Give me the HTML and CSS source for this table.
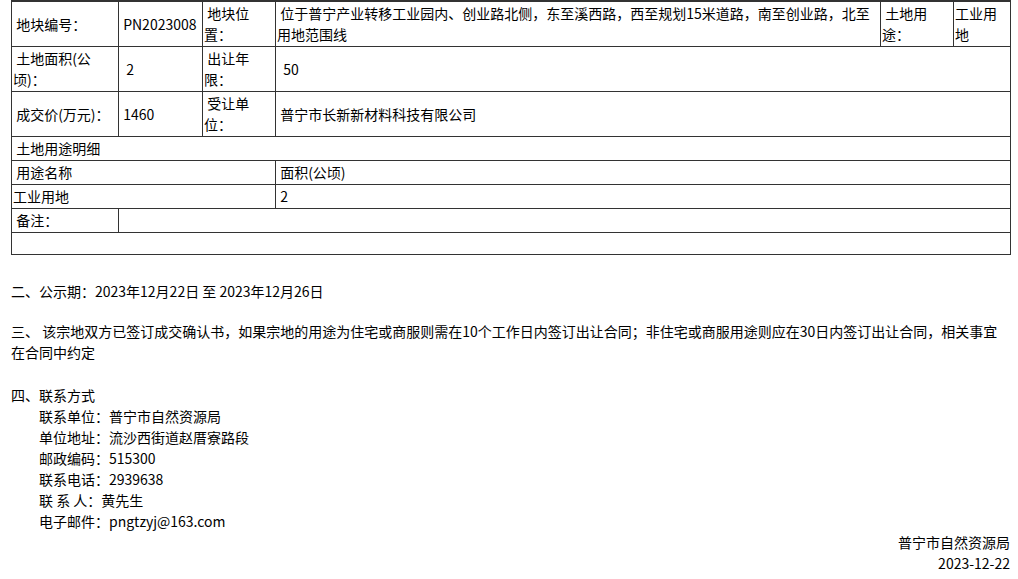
FILE: index.html
```html
<!doctype html>
<html lang="zh-CN">
  <head>
    <meta charset="UTF-8" />
    <title>成交公示</title>
    <link rel="stylesheet" href="styles.css">
  </head>
  <body>
    <div class="page">
      <table class="land">
        <colgroup>
          <col class="c1" />
          <col class="c2" />
          <col class="c3" />
          <col class="c4" />
          <col class="c5" />
          <col class="c6" />
        </colgroup>
        <tr class="first">
          <td>&nbsp;地块编号：</td>
          <td>&nbsp;PN2023008</td>
          <td>&nbsp;地块位置：</td>
          <td>&nbsp;位于普宁产业转移工业园内、创业路北侧，东至溪西路，西至规划15米道路，南至创业路，北至用地范围线</td>
          <td>&nbsp;土地用途：</td>
          <td>工业用地</td>
        </tr>
        <tr>
          <td>&nbsp;土地面积(公顷)：</td>
          <td>&nbsp;&nbsp;2</td>
          <td>&nbsp;出让年限：</td>
          <td colspan="3">&nbsp;&nbsp;50</td>
        </tr>
        <tr>
          <td>&nbsp;成交价(万元)：</td>
          <td>&nbsp;1460</td>
          <td>&nbsp;受让单位：</td>
          <td colspan="3">&nbsp;普宁市长新新材料科技有限公司</td>
        </tr>
        <tr>
          <td colspan="6">&nbsp;土地用途明细</td>
        </tr>
        <tr>
          <td colspan="3">&nbsp;用途名称</td>
          <td colspan="3">&nbsp;面积(公顷)</td>
        </tr>
        <tr>
          <td colspan="3">工业用地</td>
          <td colspan="3">&nbsp;2</td>
        </tr>
        <tr>
          <td>&nbsp;备注：</td>
          <td colspan="5"></td>
        </tr>
        <tr class="blank">
          <td colspan="6"></td>
        </tr>
      </table>

      <p class="sec notice">二、公示期：2023年12月22日 至 2023年12月26日</p>
      <p class="sec terms">三、 该宗地双方已签订成交确认书，如果宗地的用途为住宅或商服则需在10个工作日内签订出让合同；非住宅或商服用途则应在30日内签订出让合同，相关事宜在合同中约定</p>

      <div class="sec contact">
        <div>四、联系方式</div>
        <div class="contact-line">联系单位：普宁市自然资源局</div>
        <div class="contact-line">单位地址：流沙西街道赵厝寮路段</div>
        <div class="contact-line">邮政编码：515300</div>
        <div class="contact-line">联系电话：2939638</div>
        <div class="contact-line">联&nbsp;系&nbsp;人：黄先生</div>
        <div class="contact-line">电子邮件：pngtzyj@163.com</div>
      </div>

      <div class="sign">
        <div>普宁市自然资源局</div>
        <div>2023-12-22</div>
      </div>
    </div>
  </body>
</html>
```

FILE: styles.css
```css
html,
body {
  margin: 0;
  padding: 0;
  background: #fff;
}
body {
  font-family: "Microsoft YaHei", "Noto Sans CJK SC", sans-serif;
  font-size: 14px;
  line-height: 21px;
  color: #000;
}
.page {
  width: 999px;
  padding: 0 0 0 11px;
}
.land {
  width: 1000px;
  border-collapse: collapse;
  table-layout: fixed;
  border-top: 2px solid #333;
}
.land td {
  border: 1px solid #333;
  padding: 1px;
  vertical-align: middle;
  word-break: break-all;
}
.land .c1 {
  width: 107px;
}
.land .c2 {
  width: 84px;
}
.land .c3 {
  width: 73px;
}
.land .c4 {
  width: 605px;
}
.land .c5 {
  width: 73px;
}
.land .c6 {
  width: 57px;
}
.land .first td {
  border-top: 2px solid #333;
}
.land .blank td {
  height: 19px;
}
.sec {
  margin: 0;
}
.notice {
  margin-top: 26px;
}
.terms {
  margin-top: 19px;
}
.contact {
  margin-top: 22px;
}
.contact-line {
  padding-left: 28px;
}
.sign {
  text-align: right;
}
```
